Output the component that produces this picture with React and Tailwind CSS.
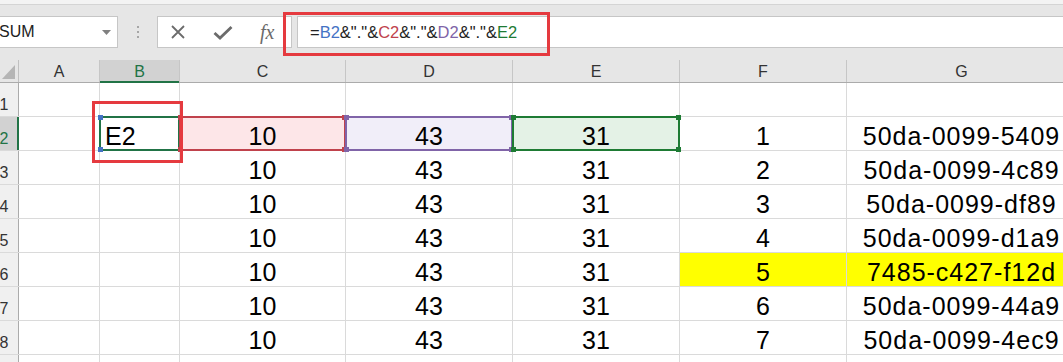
import React from 'react'

const COLS = [
  { key: 'A', w: 81 },
  { key: 'B', w: 80 },
  { key: 'C', w: 166 },
  { key: 'D', w: 167 },
  { key: 'E', w: 167 },
  { key: 'F', w: 167 },
  { key: 'G', w: 230 },
]

const IDS = {
  1: '50da-0099-5409',
  2: '50da-0099-4c89',
  3: '50da-0099-df89',
  4: '50da-0099-d1a9',
  5: '7485-c427-f12d',
  6: '50da-0099-44a9',
  7: '50da-0099-4ec9',
}

function Handles({ color, corners = ['tl', 'tr', 'bl', 'br'] }) {
  const pos = {
    tl: 'left-[-3px] top-[-3px]',
    tr: 'right-[-3px] top-[-3px]',
    bl: 'left-[-3px] bottom-[-3px]',
    br: 'right-[-3px] bottom-[-3px]',
  }
  return corners.map((c) => (
    <span key={c} className={`absolute z-20 h-[5px] w-[5px] ${pos[c]} ${color}`} />
  ))
}

function Range({ border, handle, corners }) {
  return (
    <div className={`pointer-events-none absolute -left-px -top-px bottom-[-1px] right-[-1px] z-10 border-2 ${border}`}>
      <Handles color={handle} corners={corners} />
    </div>
  )
}

function Cell({ col, row }) {
  const base = 'relative flex h-full shrink-0 items-center border-r border-[#dadada] pt-[5px] text-[25px] leading-none text-black'
  const w = { width: col.w }

  if (row === 2 && col.key === 'B') {
    return (
      <div className={`${base} justify-start pl-[5px]`} style={w}>
        E2
        <Range border="border-[#217346]" handle="bg-[#4472c4]" corners={['tl', 'bl']} />
      </div>
    )
  }
  if (row === 2 && col.key === 'C') {
    return (
      <div className={`${base} justify-center bg-[#fde6e8]`} style={w}>
        10
        <Range border="border-[#c0424c]" handle="bg-[#c0424c]" />
      </div>
    )
  }
  if (row === 2 && col.key === 'D') {
    return (
      <div className={`${base} justify-center bg-[#f1eef9]`} style={w}>
        43
        <Range border="border-[#8064a8]" handle="bg-[#8064a8]" />
      </div>
    )
  }
  if (row === 2 && col.key === 'E') {
    return (
      <div className={`${base} justify-center bg-[#e4f2e6]`} style={w}>
        31
        <Range border="border-[#1e7b34]" handle="bg-[#1e7b34]" />
      </div>
    )
  }

  const yellow = row === 6 && (col.key === 'F' || col.key === 'G')
  let text = ''
  if (row >= 2 && row <= 8) {
    if (col.key === 'C') text = '10'
    if (col.key === 'D') text = '43'
    if (col.key === 'E') text = '31'
    if (col.key === 'F') text = String(row - 1)
    if (col.key === 'G') text = IDS[row - 1]
  }

  return (
    <div
      className={`${base} justify-center ${yellow ? 'bg-[#ffff00]' : ''} ${col.key === 'G' ? 'tracking-[1px] whitespace-nowrap' : ''}`}
      style={w}
    >
      {text}
    </div>
  )
}

function XIcon() {
  return (
    <svg width="16" height="16" viewBox="0 0 16 16">
      <path d="M2 2 L14 14 M14 2 L2 14" stroke="#6b6b6b" strokeWidth="1.8" fill="none" />
    </svg>
  )
}

function CheckIcon() {
  return (
    <svg width="20" height="15" viewBox="0 0 20 15">
      <path d="M1.5 8 L7 13 L18.5 2" stroke="#6b6b6b" strokeWidth="2.8" fill="none" />
    </svg>
  )
}

export default function App() {
  const rows = [1, 2, 3, 4, 5, 6, 7, 8, 9]

  return (
    <div className="relative h-[362px] w-[1063px] overflow-hidden bg-white font-['Liberation_Sans',Arial,sans-serif]">
      {/* ribbon edge */}
      <div className="h-[5px] border-b border-[#d4d4d4] bg-[#f3f3f3]" />

      {/* formula bar */}
      <div className="flex h-[55px] items-start bg-[#e6e6e6] pt-[11px]">
        <div className="flex h-[32px] w-[118px] shrink-0 items-center justify-between border border-l-0 border-[#c6c6c6] bg-white pr-[6px] text-[16px] text-[#222]">
          <span className="-ml-px">SUM</span>
          <svg width="9" height="5" viewBox="0 0 9 5">
            <path d="M0 0 L9 0 L4.5 5 Z" fill="#808080" />
          </svg>
        </div>
        <div className="flex h-[32px] w-[39px] shrink-0 flex-col items-center justify-center gap-[3px]">
          <span className="h-[2px] w-[2px] bg-[#a6a6a6]" />
          <span className="h-[2px] w-[2px] bg-[#a6a6a6]" />
          <span className="h-[2px] w-[2px] bg-[#a6a6a6]" />
        </div>
        <div className="flex h-[32px] w-[135px] shrink-0 items-center border border-[#c6c6c6] bg-white">
          <span className="ml-[12px] flex w-[16px] justify-center">
            <XIcon />
          </span>
          <span className="ml-[27px] flex w-[20px] justify-center">
            <CheckIcon />
          </span>
          <span className="ml-[27px] font-['Liberation_Serif',serif] text-[20px] italic text-[#6b6b6b]">fx</span>
        </div>
        <div className="ml-[5px] flex h-[32px] flex-1 items-center border border-r-0 border-[#c6c6c6] bg-white pl-[12px] text-[16.5px] text-[#222]">
          <span>=</span>
          <span className="text-[#4472c4]">B2</span>
          <span>&amp;"."&amp;</span>
          <span className="text-[#c0424c]">C2</span>
          <span>&amp;"."&amp;</span>
          <span className="text-[#8064a8]">D2</span>
          <span>&amp;"."&amp;</span>
          <span className="text-[#1e7b34]">E2</span>
        </div>
      </div>

      {/* column headers */}
      <div className="flex h-[23px] border-b border-[#ababab] bg-[#e6e6e6]">
        <div className="relative flex w-[19px] shrink-0 items-end justify-end border-r border-[#c0c0c0] pb-[3px] pr-[3px]">
          <svg width="13" height="14" viewBox="0 0 13 14">
            <path d="M13 0 L13 14 L0 14 Z" fill="#b5b5b5" />
          </svg>
        </div>
        {COLS.map((c) => (
          <div
            key={c.key}
            className={`relative flex shrink-0 items-center justify-center border-r border-[#c6c6c6] pt-[2px] text-[16px] ${
              c.key === 'B' ? 'bg-[#d2d2d2] text-[#217346]' : 'text-[#333]'
            }`}
            style={{ width: c.w }}
          >
            {c.key}
            {c.key === 'B' && <span className="absolute bottom-[-1px] left-0 right-0 h-[2px] bg-[#217346]" />}
          </div>
        ))}
      </div>

      {/* grid */}
      <div className="flex flex-col">
        {rows.map((r) => (
          <div key={r} className="flex h-[34px] shrink-0 border-b border-[#dadada]">
            <div
              className={`relative flex w-[19px] shrink-0 items-end overflow-hidden border-r ${
                r === 2 ? 'border-[#217346] bg-[#d2d2d2] text-[#217346]' : 'border-[#ababab] bg-[#f0f0f0] text-[#333]'
              }`}
            >
              {r < 9 && (
                <span className="ml-[-18px] w-[44px] shrink-0 pb-[3px] text-center text-[16px] leading-none">{r}</span>
              )}
              {r === 2 && <span className="absolute right-[-1px] top-0 h-full w-[2px] bg-[#217346]" />}
            </div>
            {COLS.map((c) => (
              <Cell key={c.key} col={c} row={r} />
            ))}
          </div>
        ))}
      </div>

      {/* annotation boxes */}
      <div className="pointer-events-none absolute left-[283px] top-[12px] h-[44px] w-[267px] border-[3px] border-[#e53a3f]" />
      <div className="pointer-events-none absolute left-[92px] top-[101px] z-30 h-[62px] w-[91px] border-[3px] border-[#e53a3f]" />
    </div>
  )
}
